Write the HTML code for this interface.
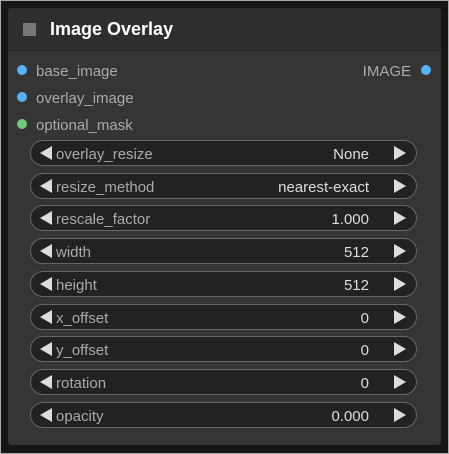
<!DOCTYPE html><html><head><style>
body{margin:0;width:449px;height:454px;background:#161616;position:relative;overflow:hidden;font-family:"Liberation Sans",sans-serif;}
.frame{position:absolute;left:0;top:0;width:447px;height:452px;border:1px solid #aaa;}
.node{position:absolute;left:8px;top:8px;width:433px;height:437px;background:#353535;border-radius:3px;}
.title{position:absolute;left:0;top:0;width:433px;height:42px;background:#2e2e2e;border-bottom:1px solid #252525;border-radius:3px 3px 0 0;}
.sq{position:absolute;left:15px;top:15px;width:13px;height:13px;background:#777;}
.tt{position:absolute;left:42px;top:11px;font-size:18px;font-weight:bold;color:#fff;}
.slot{position:absolute;left:28px;font-size:15px;color:#aaa;}
.dot{position:absolute;left:9px;width:10px;height:10px;border-radius:50%;}
.w{position:absolute;left:22px;width:385px;height:24px;background:#222;border:1px solid #666;border-radius:13px;color:#aaa;font-size:15px;}
.w .l{position:absolute;left:9px;top:5px;width:0;height:0;border-top:7px solid transparent;border-bottom:7px solid transparent;border-right:12px solid #ddd}
.w .n{position:absolute;left:25px;top:5px}
.w .v{position:absolute;right:47px;top:5px;color:#ddd}
.w .r{position:absolute;right:10px;top:5px;width:0;height:0;border-top:7px solid transparent;border-bottom:7px solid transparent;border-left:12px solid #ddd}
</style></head><body><div class="frame"></div>
<div class="node">
<div class="title"><div class="sq"></div><div class="tt">Image Overlay</div></div>
<div class="dot" style="top:57px;background:#5ab0f5"></div><div class="slot" style="top:55px">base_image</div>
<div class="dot" style="top:84px;background:#5ab0f5"></div><div class="slot" style="top:82px">overlay_image</div>
<div class="dot" style="top:111px;background:#6fca7a"></div><div class="slot" style="top:109px">optional_mask</div>
<div class="slot" style="top:55px;left:auto;right:30px">IMAGE</div><div class="dot" style="top:57px;left:413px;background:#5ab0f5"></div>
<div class="w" style="top:132px"><span class="l"></span><span class="n">overlay_resize</span><span class="v">None</span><span class="r"></span></div>
<div class="w" style="top:165px"><span class="l"></span><span class="n">resize_method</span><span class="v">nearest-exact</span><span class="r"></span></div>
<div class="w" style="top:197px"><span class="l"></span><span class="n">rescale_factor</span><span class="v">1.000</span><span class="r"></span></div>
<div class="w" style="top:230px"><span class="l"></span><span class="n">width</span><span class="v">512</span><span class="r"></span></div>
<div class="w" style="top:263px"><span class="l"></span><span class="n">height</span><span class="v">512</span><span class="r"></span></div>
<div class="w" style="top:296px"><span class="l"></span><span class="n">x_offset</span><span class="v">0</span><span class="r"></span></div>
<div class="w" style="top:328px"><span class="l"></span><span class="n">y_offset</span><span class="v">0</span><span class="r"></span></div>
<div class="w" style="top:361px"><span class="l"></span><span class="n">rotation</span><span class="v">0</span><span class="r"></span></div>
<div class="w" style="top:394px"><span class="l"></span><span class="n">opacity</span><span class="v">0.000</span><span class="r"></span></div>
</div></body></html>
